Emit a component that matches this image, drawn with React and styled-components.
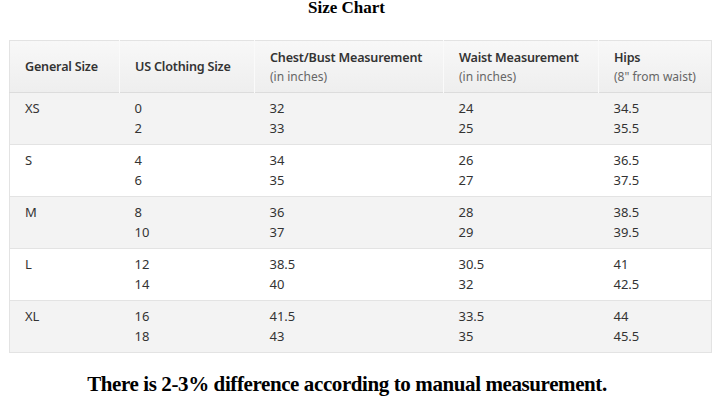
import React from 'react';
import styled, { createGlobalStyle } from 'styled-components';

const GlobalStyle = createGlobalStyle`
  html, body {
    margin: 0;
    padding: 0;
    background: #ffffff;
  }
`;

const Page = styled.div`
  width: 719px;
  height: 400px;
  overflow: hidden;
`;

const Title = styled.h2`
  margin: 0;
  padding-right: 26px;
  height: 40px;
  font-family: "Liberation Serif", "Times New Roman", serif;
  font-size: 17px;
  font-weight: bold;
  line-height: 16px;
  text-align: center;
  color: #000;
`;

const Chart = styled.table`
  margin-left: 9px;
  width: 702px;
  table-layout: fixed;
  border-collapse: collapse;
  border: 1px solid #e3e3e3;
  font-family: "Noto Sans", "Open Sans", sans-serif;
  font-size: 13px;
  color: #333;
`;

const HeadRow = styled.tr`
  height: 52px;
  background: linear-gradient(#f8f8f8, #eeeeee);
  border-bottom: 1px solid #dcdcdc;
`;

const HeadCell = styled.th`
  padding: 0 15px;
  text-align: left;
  vertical-align: middle;
  font-size: 12.6px;
  font-weight: 600;
  line-height: 19px;
  letter-spacing: -0.2px;
  white-space: nowrap;
  color: #333;
  border-left: 1px solid #fafafa;
  &:first-child {
    border-left: none;
  }
`;

const Sub = styled.div`
  font-weight: normal;
  font-size: 12px;
  letter-spacing: 0;
  color: #666;
`;

const Row = styled.tr`
  height: 52px;
  background: ${(p) => (p.$shade ? '#f3f3f3' : '#ffffff')};
  border-top: 1px solid #e3e3e3;
`;

const Cell = styled.td`
  padding: 5px 15px 0;
  vertical-align: top;
  line-height: 20px;
`;

const Note = styled.p`
  margin: 19px 0 0;
  padding-right: 25px;
  font-family: "Liberation Serif", "Times New Roman", serif;
  font-size: 21px;
  font-weight: bold;
  letter-spacing: -0.4px;
  line-height: 24px;
  text-align: center;
  color: #000;
`;

const columns = [
  { w: 110, title: 'General Size' },
  { w: 135, title: 'US Clothing Size' },
  { w: 189, title: 'Chest/Bust Measurement', sub: '(in inches)' },
  { w: 155, title: 'Waist Measurement', sub: '(in inches)' },
  { w: 113, title: 'Hips', sub: '(8" from waist)' },
];

const rows = [
  ['XS', ['0', '2'], ['32', '33'], ['24', '25'], ['34.5', '35.5']],
  ['S', ['4', '6'], ['34', '35'], ['26', '27'], ['36.5', '37.5']],
  ['M', ['8', '10'], ['36', '37'], ['28', '29'], ['38.5', '39.5']],
  ['L', ['12', '14'], ['38.5', '40'], ['30.5', '32'], ['41', '42.5']],
  ['XL', ['16', '18'], ['41.5', '43'], ['33.5', '35'], ['44', '45.5']],
];

export default function App() {
  return (
    <Page>
      <GlobalStyle />
      <Title>Size Chart</Title>
      <Chart>
        <colgroup>
          {columns.map((c) => (
            <col key={c.title} style={{ width: c.w }} />
          ))}
        </colgroup>
        <thead>
          <HeadRow>
            {columns.map((c) => (
              <HeadCell key={c.title}>
                {c.title}
                {c.sub && <Sub>{c.sub}</Sub>}
              </HeadCell>
            ))}
          </HeadRow>
        </thead>
        <tbody>
          {rows.map((r, i) => (
            <Row key={r[0]} $shade={i % 2 === 0}>
              <Cell>{r[0]}</Cell>
              {r.slice(1).map((vals, j) => (
                <Cell key={j}>
                  {vals[0]}
                  <br />
                  {vals[1]}
                </Cell>
              ))}
            </Row>
          ))}
        </tbody>
      </Chart>
      <Note>There is 2-3% difference according to manual measurement.</Note>
    </Page>
  );
}
